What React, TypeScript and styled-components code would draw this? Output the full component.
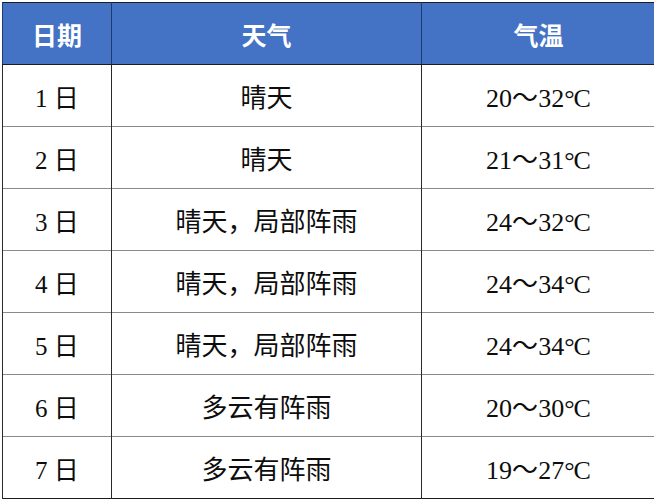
import React from "react";
import styled, { createGlobalStyle } from "styled-components";

const GlobalStyle = createGlobalStyle`
  html, body {
    margin: 0;
    padding: 0;
    background: #ffffff;
  }
`;

const Page = styled.div`
  padding: 2px 0 0 2px;
`;

const Table = styled.table`
  width: 650px;
  border-collapse: collapse;
  table-layout: fixed;
  border: 1px solid #1c1c1c;
`;

const HeadCell = styled.th<{ $w: number }>`
  width: ${(p) => p.$w}px;
  height: 61px;
  padding: 0;
  background: #4472c4;
  color: #ffffff;
  font-family: "Noto Sans CJK SC", "Noto Sans", sans-serif;
  font-weight: 700;
  font-size: 25px;
  text-align: center;
  vertical-align: middle;
  border-left: 1px solid #1f3a6b;
  border-bottom: 1px solid #1c1c1c;
`;

const Row = styled.tr`
  & + & td {
    border-top: 1px solid #8a8a8a;
  }
`;

const Cell = styled.td<{ $serif?: boolean }>`
  height: 61px;
  padding: 0;
  text-align: center;
  vertical-align: middle;
  color: #0d0d0d;
  font-size: 26px;
  font-family: ${(p) =>
    p.$serif
      ? `"Liberation Serif", "Noto Sans CJK SC", serif`
      : `"Noto Sans CJK SC", "Noto Sans", sans-serif`};
  border-left: 1px solid #2a2a2a;
`;

const DayCell = styled(Cell)`
  font-size: 25px;
`;

const Degree = styled.span`
  letter-spacing: -1px;
`;

const days = [
  { day: "1", weather: "晴天", low: "20", high: "32" },
  { day: "2", weather: "晴天", low: "21", high: "31" },
  { day: "3", weather: "晴天，局部阵雨", low: "24", high: "32" },
  { day: "4", weather: "晴天，局部阵雨", low: "24", high: "34" },
  { day: "5", weather: "晴天，局部阵雨", low: "24", high: "34" },
  { day: "6", weather: "多云有阵雨", low: "20", high: "30" },
  { day: "7", weather: "多云有阵雨", low: "19", high: "27" },
];

export default function App() {
  return (
    <Page>
      <GlobalStyle />
      <Table>
        <thead>
          <tr>
            <HeadCell $w={108}>日期</HeadCell>
            <HeadCell $w={309}>天气</HeadCell>
            <HeadCell $w={233}>气温</HeadCell>
          </tr>
        </thead>
        <tbody>
          {days.map((d) => (
            <Row key={d.day}>
              <DayCell $serif>{d.day} 日</DayCell>
              <Cell>{d.weather}</Cell>
              <Cell $serif>
                {d.low}～{d.high}
                <Degree>°</Degree>C
              </Cell>
            </Row>
          ))}
        </tbody>
      </Table>
    </Page>
  );
}
